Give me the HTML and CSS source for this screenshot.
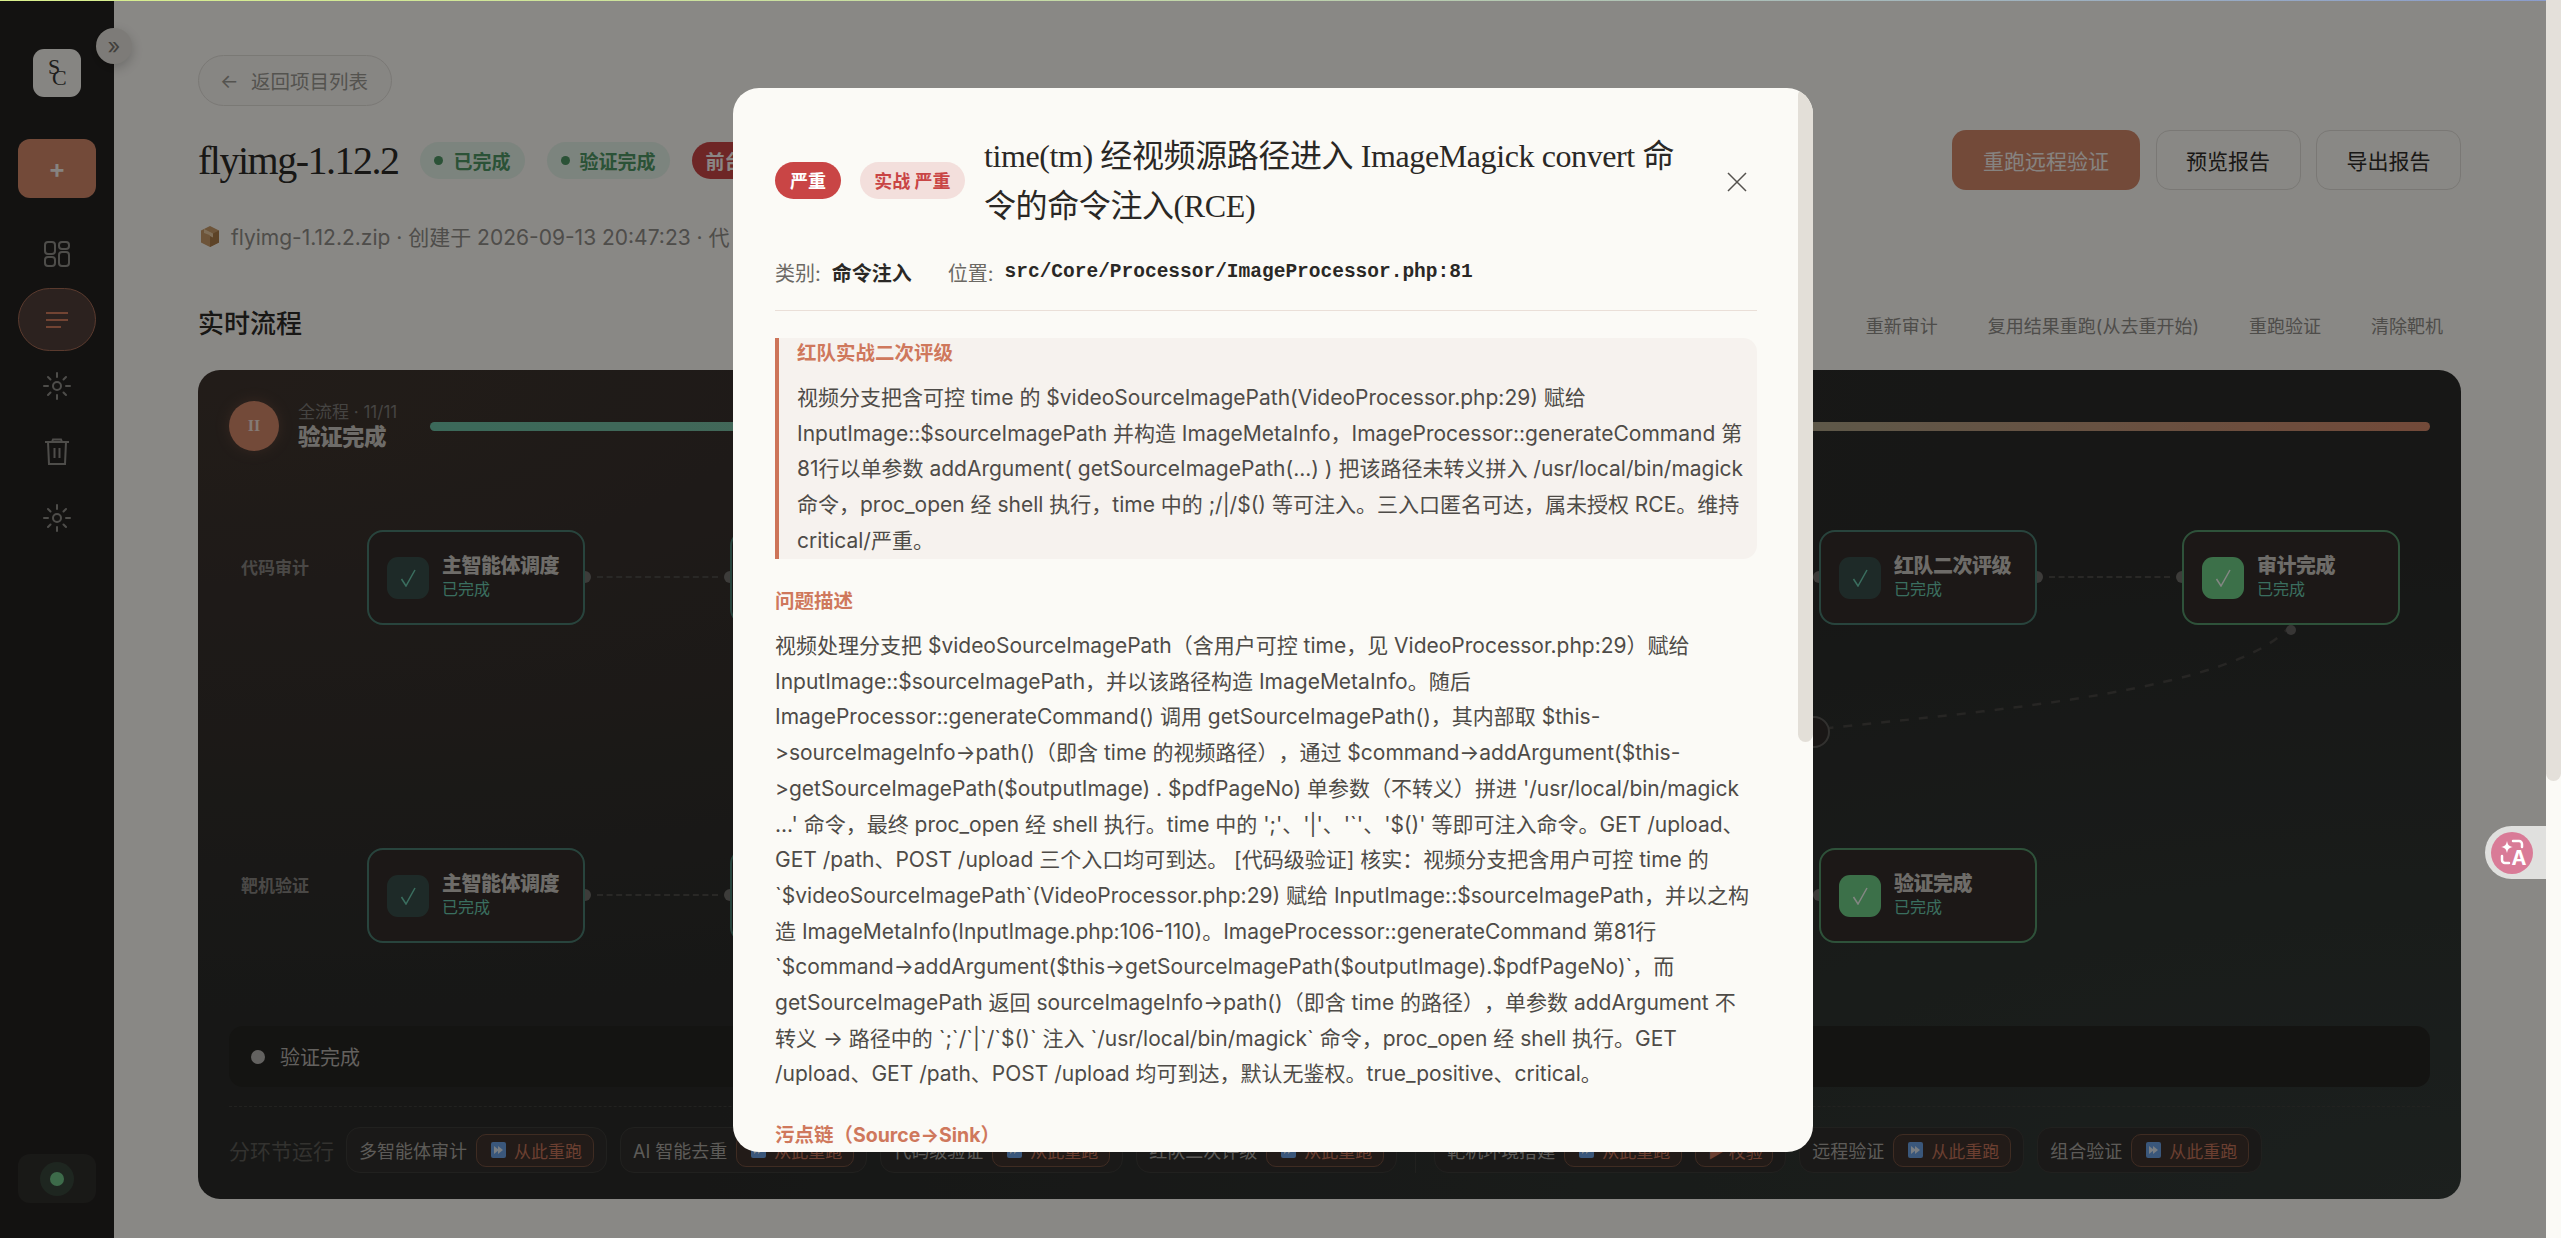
FILE: index.html
```html
<!DOCTYPE html>
<html lang="en">

<head>
    <meta charset="UTF-8">
    <meta name="viewport" content="width=device-width, initial-scale=1.0">
    <link rel="stylesheet" href="styles.css">
    <title>flyimg-1.12.2</title>
</head>

<body>
    <svg class="icon-defs" width="0" height="0">
        <symbol id="check" viewBox="0 0 16 18"><path d="M1.500 10L6 17 15 1" fill="none" stroke="currentColor" stroke-width="1.500"/></symbol>
    </svg>

    <div class="top-line"></div>

    <div class="app">
        <aside class="sidebar">
            <div class="logo">
                <svg width="48" height="48" viewBox="0 0 48 48"><text x="15" y="25" class="logo-mark">S</text><text x="19" y="36" class="logo-mark">C</text></svg>
            </div>
            <button class="new-btn">+</button>
            <nav class="side-nav">
                <a class="side-item">
                    <svg width="26" height="26" viewBox="0 0 26 26" fill="none" stroke="currentColor" stroke-width="2"><rect x="1" y="1" width="10" height="12" rx="3"/><rect x="15" y="1" width="10" height="7" rx="3"/><rect x="1" y="16" width="10" height="9" rx="3"/><rect x="15" y="11" width="10" height="14" rx="3"/></svg>
                </a>
                <a class="side-item active">
                    <svg width="24" height="18" viewBox="0 0 24 18" fill="none" stroke="currentColor" stroke-width="2.2"><path d="M1 2h22M1 9h22M1 16h15"/></svg>
                </a>
                <a class="side-item">
                    <svg width="28" height="28" viewBox="0 0 28 28" fill="none" stroke="currentColor" stroke-width="2" stroke-linecap="round"><circle cx="14" cy="14" r="4"/><path d="M14 1v4M14 23v4M1 14h4M23 14h4M5 5l2.5 2.5M20.5 20.5L23 23M5 23l2.5-2.5M20.5 7.5L23 5"/></svg>
                </a>
                <a class="side-item">
                    <svg width="26" height="28" viewBox="0 0 26 28" fill="none" stroke="currentColor" stroke-width="2"><path d="M1 4h24M8 4l1-2.5h8L18 4M4 4l1 22h16l1-22M10.500 10v10M15.500 10v10"/></svg>
                </a>
                <a class="side-item">
                    <svg width="28" height="28" viewBox="0 0 28 28" fill="none" stroke="currentColor" stroke-width="2" stroke-linecap="round"><circle cx="14" cy="14" r="4"/><path d="M14 1v4M14 23v4M1 14h4M23 14h4M5 5l2.5 2.5M20.5 20.5L23 23M5 23l2.5-2.5M20.500 7.500L23 5"/></svg>
                </a>
            </nav>
            <div class="side-status"><span class="status-halo"><span class="status-dot"></span></span></div>
        </aside>
        <button class="collapse-btn">»</button>

        <main class="main">
            <a class="back-btn"><span class="back-arrow">←</span>返回项目列表</a>

            <div class="title-row">
                <div class="title-left">
                    <h1 class="project-name">flyimg-1.12.2</h1>
                    <span class="pill pill-green"><i></i>已完成</span>
                    <span class="pill pill-green"><i></i>验证完成</span>
                    <span class="pill pill-red">前台</span>
                </div>
                <div class="title-actions">
                    <button class="btn btn-primary">重跑远程验证</button>
                    <button class="btn">预览报告</button>
                    <button class="btn">导出报告</button>
                </div>
            </div>

            <p class="project-meta">
                <svg class="zip-icon" width="20" height="23" viewBox="0 0 20 23"><path d="M10 1l9 4.500v12L10 22 1 17.500v-12z" fill="#c69a68"/><path d="M10 10l9-4.500v12L10 22z" fill="#a97a48"/><path d="M4 4l9 4.500v4l-3-1.500-.5-1L4 8z" fill="#e8c9a0"/></svg>
                flyimg-1.12.2.zip · 创建于 2026-09-13 20:47:23 · 代
            </p>

            <div class="section-head">
                <h2>实时流程</h2>
                <div class="section-links">
                    <a>重新审计</a>
                    <a>复用结果重跑(从去重开始)</a>
                    <a>重跑验证</a>
                    <a>清除靶机</a>
                </div>
            </div>

            <section class="flow-panel">
                <svg class="flow-lines" width="2263" height="829" viewBox="0 0 2263 829" fill="none">
                    <path d="M2093 255C2040 320 1800 340 1631 358" stroke="#474542" stroke-width="2.500" stroke-dasharray="9 10"/>
                    <circle cx="2093" cy="260" r="5" fill="#656361"/>
                    <circle cx="1616" cy="362" r="15" fill="#302b29" stroke="#5c5a57" stroke-width="2"/>
                </svg>

                <div class="flow-head">
                    <div class="pause-btn">II</div>
                    <div class="flow-state">
                        <span>全流程 · 11/11</span>
                        <strong>验证完成</strong>
                    </div>
                    <div class="progress"></div>
                </div>

                <div class="flow-row first-row">
                    <div class="row-label">代码审计</div>
                    <div class="node"><span class="node-check"><svg width="16" height="18"><use href="#check"/></svg></span><div class="node-text"><h4>主智能体调度</h4><small>已完成</small></div></div>
                    <div class="edge"></div>
                    <div class="node"></div>
                    <div class="edge"></div>
                    <div class="node"></div>
                    <div class="edge"></div>
                    <div class="node"></div>
                    <div class="edge"></div>
                    <div class="node"><span class="node-check"><svg width="16" height="18"><use href="#check"/></svg></span><div class="node-text"><h4>红队二次评级</h4><small>已完成</small></div></div>
                    <div class="edge"></div>
                    <div class="node node-end"><span class="node-check"><svg width="16" height="18"><use href="#check"/></svg></span><div class="node-text"><h4>审计完成</h4><small>已完成</small></div></div>
                </div>

                <div class="flow-row second-row">
                    <div class="row-label">靶机验证</div>
                    <div class="node"><span class="node-check"><svg width="16" height="18"><use href="#check"/></svg></span><div class="node-text"><h4>主智能体调度</h4><small>已完成</small></div></div>
                    <div class="edge"></div>
                    <div class="node"></div>
                    <div class="edge"></div>
                    <div class="node"></div>
                    <div class="edge"></div>
                    <div class="node"></div>
                    <div class="edge"></div>
                    <div class="node node-end"><span class="node-check"><svg width="16" height="18"><use href="#check"/></svg></span><div class="node-text"><h4>验证完成</h4><small>已完成</small></div></div>
                </div>

                <div class="flow-status"><i></i>验证完成</div>

                <div class="stage-bar">
                    <span class="stage-title">分环节运行</span>
                    <div class="chip">多智能体审计<a class="rerun"><i class="ff-icon"></i>从此重跑</a></div>
                    <div class="chip">AI 智能去重<a class="rerun"><i class="ff-icon"></i>从此重跑</a></div>
                    <div class="chip">代码级验证<a class="rerun"><i class="ff-icon"></i>从此重跑</a></div>
                    <div class="chip">红队二次评级<a class="rerun"><i class="ff-icon"></i>从此重跑</a></div>
                    <div class="stage-sep"></div>
                    <div class="chip">靶机环境搭建<a class="rerun"><i class="ff-icon"></i>从此重跑</a><a class="rerun short">▶ 校验</a></div>
                    <div class="chip">远程验证<a class="rerun"><i class="ff-icon"></i>从此重跑</a></div>
                    <div class="chip">组合验证<a class="rerun"><i class="ff-icon"></i>从此重跑</a></div>
                </div>
            </section>
        </main>

        <div class="overlay">
            <div class="modal">
                <div class="modal-thumb"></div>

                <div class="modal-head">
                    <span class="badge badge-solid">严重</span>
                    <span class="badge badge-soft">实战 严重</span>
                    <h3 class="modal-title">time(tm) 经视频源路径进入 ImageMagick convert 命令的命令注入(RCE)</h3>
                    <button class="modal-close">
                        <svg width="20" height="20" viewBox="0 0 20 20" fill="none" stroke="#55524e" stroke-width="1.500"><path d="M1 1l18 18M19 1L1 19"/></svg>
                    </button>
                </div>

                <div class="modal-meta">
                    <span>类别:</span><strong>命令注入</strong>
                    <span class="meta-second">位置:</span><code>src/Core/Processor/ImageProcessor.php:81</code>
                </div>

                <div class="note">
                    <h5>红队实战二次评级</h5>
                    <p>视频分支把含可控 time 的 $videoSourceImagePath(VideoProcessor.php:29) 赋给 InputImage::$sourceImagePath 并构造 ImageMetaInfo，ImageProcessor::generateCommand 第81行以单参数 addArgument( getSourceImagePath(...) ) 把该路径未转义拼入 /usr/local/bin/magick 命令，proc_open 经 shell 执行，time 中的 ;/|/$() 等可注入。三入口匿名可达，属未授权 RCE。维持 critical/严重。</p>
                </div>

                <h5 class="modal-label">问题描述</h5>
                <p class="modal-text">视频处理分支把 $videoSourceImagePath（含用户可控 time，见 VideoProcessor.php:29）赋给 InputImage::$sourceImagePath，并以该路径构造 ImageMetaInfo。随后 ImageProcessor::generateCommand() 调用 getSourceImagePath()，其内部取 $this-&gt;sourceImageInfo-&gt;path()（即含 time 的视频路径），通过 $command-&gt;addArgument($this-&gt;getSourceImagePath($outputImage) . $pdfPageNo) 单参数（不转义）拼进 '/usr/local/bin/magick ...' 命令，最终 proc_open 经 shell 执行。time 中的 ';'、'|'、'`'、'$()' 等即可注入命令。GET /upload、GET /path、POST /upload 三个入口均可到达。 [代码级验证] 核实：视频分支把含用户可控 time 的 `$videoSourceImagePath`(VideoProcessor.php:29) 赋给 InputImage::$sourceImagePath，并以之构造 ImageMetaInfo(InputImage.php:106-110)。ImageProcessor::generateCommand 第81行 `$command-&gt;addArgument($this-&gt;getSourceImagePath($outputImage).$pdfPageNo)`，而 getSourceImagePath 返回 sourceImageInfo-&gt;path()（即含 time 的路径），单参数 addArgument 不转义 → 路径中的 `;`/`|`/`$()` 注入 `/usr/local/bin/magick` 命令，proc_open 经 shell 执行。GET /upload、GET /path、POST /upload 均可到达，默认无鉴权。true_positive、critical。</p>

                <h5 class="modal-label taint">污点链（Source→Sink）</h5>
            </div>
        </div>

        <div class="translate-tab">
            <svg width="42" height="42" viewBox="0 0 42 42">
                <circle cx="21" cy="21" r="21" fill="#d97b97"/>
                <path d="M16 9c.8 4 2 5.200 6 6-4 .8-5.200 2-6 6-.8-4-2-5.200-6-6 4-.8 5.200-2 6-6z" fill="#fff"/>
                <path d="M22 9h6a3 3 0 0 1 3 3v3M11 24v4a3 3 0 0 0 3 3h4" fill="none" stroke="#fff" stroke-width="2.500" stroke-linecap="round"/>
                <text x="28" y="33" class="translate-a">A</text>
            </svg>
        </div>
    </div>

    <div class="page-scroll"><div class="page-thumb"></div></div>
</body>

</html>
```

FILE: styles.css
```css
* {
    padding: 0;
    margin: 0;
    box-sizing: border-box;
}

html, body {
    height: 100%;
    overflow: hidden;
}

body {
    display: flex;
    font-family: Inter, "Noto Sans CJK SC", sans-serif;
    text-spacing-trim: space-all;
    background: #f9f7f2;
    color: #2f2c28;
}

button {
    font-family: inherit;
    border: none;
    background: none;
}

.icon-defs {
    position: absolute;
}

.top-line {
    position: absolute;
    top: 0;
    left: 0;
    right: 15px;
    height: 1px;
    z-index: 5;
    background: linear-gradient(90deg, #d9f08c, #c3d8a8 45%, #8a9ccc);
}

.app {
    position: relative;
    flex: 1;
    display: flex;
    height: 1238px;
    min-width: 0;
}

/* fake page scrollbar, the overlay stops at it */
.page-scroll {
    width: 15px;
    background: #fbfaf6;
}

.page-thumb {
    height: 781px;
    background: #e4e0da;
    border-radius: 0 0 8px 8px;
}

/* sidebar */
.sidebar {
    width: 114px;
    flex-shrink: 0;
    background: #242220;
    display: flex;
    flex-direction: column;
    align-items: center;
    padding: 49px 18px 35px;
}

.logo {
    width: 48px;
    height: 48px;
    border-radius: 11px;
    background: #f4f2ed;
}

.logo-mark {
    font: 22px "Liberation Serif", serif;
    fill: #3a3835;
}

.new-btn {
    width: 78px;
    height: 59px;
    margin-top: 42px;
    border-radius: 12px;
    background: #d18769;
    color: #f5efe9;
    font-size: 26px;
    font-weight: 600;
}

.side-nav {
    width: 78px;
    margin-top: 24px;
    display: flex;
    flex-direction: column;
    gap: 3px;
}

.side-item {
    height: 63px;
    display: flex;
    align-items: center;
    justify-content: center;
    color: #8e8c88;
}

.side-item.active {
    color: #cf7c5e;
    background: #503f3a;
    border: 1px solid #a56a54;
    border-radius: 32px;
}

.side-status {
    width: 78px;
    height: 49px;
    margin-top: auto;
    border-radius: 12px;
    background: #2f2e2b;
    display: flex;
    align-items: center;
    justify-content: center;
}

.status-halo {
    width: 34px;
    height: 34px;
    border-radius: 50%;
    background: #37463b;
    display: flex;
    align-items: center;
    justify-content: center;
}

.status-dot {
    width: 14px;
    height: 14px;
    border-radius: 50%;
    background: #70c488;
}

.collapse-btn {
    position: absolute;
    left: 96px;
    top: 28px;
    width: 36px;
    height: 36px;
    border-radius: 50%;
    background: #e4e1da;
    color: #77746f;
    font-size: 22px;
    line-height: 30px;
    box-shadow: 0 4px 12px rgba(0, 0, 0, .2);
}

/* main area */
.main {
    flex: 1;
    min-width: 0;
    padding: 55px 85px 0 84px;
}

.back-btn {
    display: inline-flex;
    align-items: center;
    height: 51px;
    width: 194px;
    padding-left: 21px;
    border: 1px solid #dfdcd6;
    border-radius: 26px;
    background: #f6f4ef;
    color: #9a9791;
    font-size: 19.500px;
}

.back-arrow {
    width: 31px;
}

.title-row {
    display: flex;
    justify-content: space-between;
    align-items: center;
    height: 60px;
    margin-top: 24px;
}

.title-left {
    display: flex;
    align-items: center;
    gap: 22px;
}

.project-name {
    font-family: "Liberation Serif", serif;
    font-size: 40px;
    font-weight: 400;
    letter-spacing: -1.500px;
    color: #2c2a27;
    white-space: nowrap;
}

.pill {
    display: inline-flex;
    align-items: center;
    gap: 10px;
    height: 37px;
    padding: 0 14px;
    border-radius: 19px;
    font-size: 19px;
    font-weight: 700;
    white-space: nowrap;
}

.pill i {
    width: 9px;
    height: 9px;
    border-radius: 50%;
    background: currentColor;
}

.pill-green {
    background: #e2f0e5;
    color: #4f9664;
}

.pill-red {
    background: #c94545;
    color: #fbf5f2;
}

.title-actions {
    display: flex;
    gap: 15.500px;
    align-items: center;
}

.btn {
    height: 60px;
    width: 145px;
    border: 1px solid #dedbd5;
    border-radius: 14px;
    color: #2f2c28;
    font-size: 21px;
}

.btn-primary {
    width: 188px;
    background: #d18769;
    color: #f5efe9;
    border: none;
}

.project-meta {
    display: flex;
    align-items: center;
    gap: 11px;
    height: 30px;
    margin-top: 31px;
    padding-left: 2px;
    font-size: 21px;
    color: #8f8c87;
    white-space: nowrap;
}

.section-head {
    display: flex;
    justify-content: space-between;
    align-items: center;
    height: 40px;
    margin-top: 52px;
}

.section-head h2 {
    margin-top: -4px;
    font-family: "Liberation Serif", "Noto Sans CJK SC", serif;
    font-size: 26px;
    font-weight: 500;
    color: #2c2a27;
}

.section-links {
    display: flex;
    gap: 50px;
    padding: 4px 18px 0 0;
    font-size: 18px;
    color: #8f8c87;
}

/* flow panel */
.flow-panel {
    position: relative;
    z-index: 0;
    height: 829px;
    margin-top: 27px;
    padding: 31px 31px 26px;
    border-radius: 22px;
    overflow: hidden;
    background:
        radial-gradient(ellipse at 0% 0%, #3f342e, transparent 55%),
        radial-gradient(ellipse at 100% 100%, #333b37, transparent 55%),
        #2a2b29;
}

.flow-lines {
    position: absolute;
    left: 0;
    top: 0;
}

.flow-head {
    display: flex;
    align-items: center;
    height: 50px;
}

.pause-btn {
    width: 50px;
    height: 50px;
    border-radius: 50%;
    background: #d18769;
    box-shadow: 0 0 14px rgba(209, 135, 105, .25);
    color: #f0dfd6;
    font: 700 16px "Liberation Serif", serif;
    display: flex;
    align-items: center;
    justify-content: center;
}

.flow-state {
    width: 132px;
    margin-left: 19px;
    display: flex;
    flex-direction: column;
}

.flow-state span {
    font-size: 17px;
    line-height: 22px;
    color: #7f7c78;
}

.flow-state strong {
    font-size: 22.500px;
    line-height: 28px;
    font-weight: 900;
    letter-spacing: -.5px;
    color: #c9c5bf;
}

.progress {
    flex: 1;
    height: 9px;
    border-radius: 5px;
    background: linear-gradient(90deg, #6cc0a4, #8fb59c 45%, #d18769);
}

.flow-row {
    display: flex;
    height: 95px;
}

.first-row {
    margin-top: 79px;
}

.second-row {
    margin-top: 223px;
}

.row-label {
    width: 138px;
    padding: 26px 0 0 12px;
    font-size: 17px;
    line-height: 24px;
    font-weight: 700;
    color: #878480;
}

.node {
    position: relative;
    width: 218px;
    height: 95px;
    flex-shrink: 0;
    padding-left: 18px;
    display: flex;
    align-items: center;
    gap: 13px;
    border: 2px solid #4a7d70;
    border-radius: 16px;
    background: #332d2a;
}

.node::before,
.node::after {
    content: "";
    position: absolute;
    top: 39px;
    width: 12px;
    height: 12px;
    border-radius: 50%;
    background: #6f6d6a;
    z-index: -1;
}

.node::before {
    left: -8px;
}

.node::after {
    right: -8px;
}

.first-row .node:nth-child(2)::before,
.second-row .node:nth-child(2)::before,
.node-end::after {
    display: none;
}

.node-check {
    width: 42px;
    height: 42px;
    border-radius: 11px;
    background: #384e49;
    color: #6bc9ae;
    display: flex;
    align-items: center;
    justify-content: center;
}

.node-end {
    border-color: #55956a;
}

.node-end .node-check {
    background: #6dcc85;
    color: #f0f5ef;
}

.node-text {
    padding-bottom: 2px;
}

.node h4 {
    font-size: 20px;
    line-height: 25px;
    font-weight: 900;
    letter-spacing: -.5px;
    color: #c9c5bf;
}

.node small {
    display: block;
    font-size: 16px;
    line-height: 20px;
    color: #6bc9ae;
}

.edge {
    width: 145px;
    flex-shrink: 0;
    align-self: center;
    padding: 0 12px;
    height: 3px;
}

.edge::before {
    content: "";
    display: block;
    border-top: 2.500px dashed #4b4946;
}

.flow-status {
    display: flex;
    align-items: center;
    gap: 15px;
    height: 61px;
    margin-top: 83px;
    padding-left: 22px;
    border-radius: 14px;
    background: #262522;
    font-size: 20px;
    color: #b5b1ac;
}

.flow-status i {
    width: 14px;
    height: 14px;
    border-radius: 50%;
    background: #b5b3af;
}

.stage-bar {
    display: flex;
    align-items: center;
    gap: 13px;
    height: 67px;
    margin-top: 19px;
    padding-top: 20px;
    border-top: 1px dashed #3f3e3b;
    white-space: nowrap;
}

.stage-title {
    width: 104px;
    font-size: 21px;
    color: #5d5b57;
}

.chip {
    display: flex;
    align-items: center;
    gap: 9px;
    height: 46px;
    padding: 0 12px;
    border: 1px solid #3d3c39;
    border-radius: 14px;
    background: #312f2c;
    font-size: 18px;
    color: #a9a6a1;
}

.stage-sep {
    width: 1px;
    height: 46px;
    margin: 0 5px;
    background: #3d3c39;
}

.rerun {
    display: flex;
    align-items: center;
    gap: 8px;
    width: 118px;
    height: 33px;
    padding-left: 14px;
    border: 1px solid #74503f;
    border-radius: 10px;
    background: #3e322c;
    font-size: 17px;
    color: #c4745a;
}

.rerun.short {
    width: 78px;
    margin-left: 4px;
    padding-left: 12px;
}

.ff-icon {
    position: relative;
    display: block;
    width: 15px;
    height: 16px;
    border-radius: 2px;
    background: #6a9fe0;
}

.ff-icon::after {
    content: "";
    position: absolute;
    left: 3px;
    top: 4px;
    border-style: solid;
    border-width: 4px 0 4px 5px;
    border-color: transparent transparent transparent #dde6ef;
}

.ff-icon::before {
    content: "";
    position: absolute;
    left: 7px;
    top: 4px;
    border-style: solid;
    border-width: 4px 0 4px 5px;
    border-color: transparent transparent transparent #dde6ef;
}

/* dialog */
.overlay {
    position: absolute;
    inset: 0;
    z-index: 3;
    padding-top: 2px;
    display: flex;
    align-items: center;
    justify-content: center;
    background: rgba(0, 0, 0, .45);
}

.modal {
    position: relative;
    width: 1080px;
    height: 1064px;
    padding: 41px 56px 0 42px;
    overflow: hidden;
    border-radius: 26px;
    background: #fbfaf6;
}

.modal-thumb {
    position: absolute;
    top: 0;
    right: 0;
    width: 15px;
    height: 654px;
    border-radius: 8px;
    background: #e3dfd8;
}

.modal-head {
    display: flex;
    align-items: center;
}

.badge {
    display: flex;
    align-items: center;
    justify-content: center;
    height: 37px;
    border-radius: 19px;
    font-size: 18px;
    font-weight: 700;
    white-space: nowrap;
    flex-shrink: 0;
}

.badge-solid {
    width: 66px;
    background: #c94545;
    color: #fff;
}

.badge-soft {
    width: 105px;
    margin-left: 19px;
    background: #f3dfdc;
    color: #c94545;
}

.modal-title {
    flex: 1;
    margin: 2px 22px 0 19px;
    font-family: "Liberation Serif", "Noto Sans CJK SC", serif;
    font-size: 32px;
    line-height: 50px;
    font-weight: 400;
    letter-spacing: -.4px;
    color: #2a2825;
}

.modal-close {
    width: 40px;
    height: 40px;
    display: flex;
    align-items: center;
    justify-content: center;
    margin-top: 4px;
}

.modal-meta {
    display: flex;
    align-items: center;
    height: 30px;
    margin-top: 26px;
    font-size: 20px;
    color: #6c6964;
}

.modal-meta strong {
    margin-left: 11px;
    color: #2a2825;
}

.meta-second {
    margin-left: 36px;
}

.modal-meta code {
    margin-left: 11px;
    font: 700 19.500px "Liberation Mono", monospace;
    color: #2a2825;
}

.note {
    margin-top: 51px;
    padding: 0 4px 0 18px;
    height: 221px;
    border-left: 4px solid #cd7459;
    border-radius: 0 14px 14px 0;
    background: #f6f2ee;
    position: relative;
}

/* rule under the meta row */
.note::before {
    content: "";
    position: absolute;
    left: -4px;
    right: 0;
    top: -28px;
    border-top: 1px solid #eadfd8;
}

.note h5,
.modal-label {
    font-size: 19.500px;
    line-height: 30px;
    font-weight: 700;
    color: #cf785c;
}

.note p,
.modal-text {
    margin-top: 12px;
    font-size: 21px;
    line-height: 35.700px;
    color: #4e4b47;
}

.modal-text {
    margin-right: 5px;
}

.modal-label {
    margin-top: 27px;
}

.taint {
    margin-top: 28px;
}

/* extension tab, sits above the dim layer */
.translate-tab {
    position: absolute;
    right: 0;
    top: 826px;
    z-index: 4;
    width: 61px;
    height: 53px;
    padding-left: 6px;
    display: flex;
    align-items: center;
    border-radius: 27px 0 0 27px;
    background: #e0e0de;
}

.translate-a {
    font: 700 20px Inter, sans-serif;
    fill: #fff;
    text-anchor: middle;
}
```
